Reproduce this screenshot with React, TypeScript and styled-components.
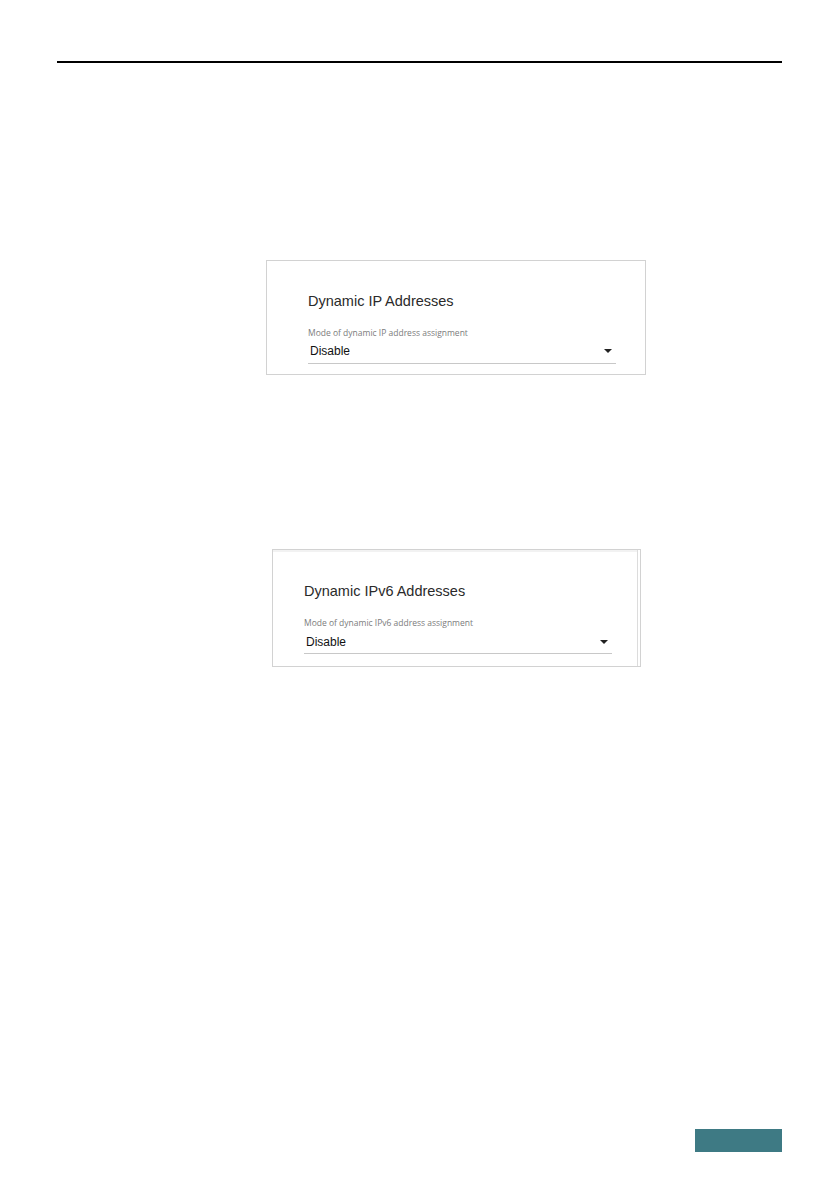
import styled, {createGlobalStyle} from "styled-components";

const GlobalStyle = createGlobalStyle`
  html, body {
    margin: 0;
    padding: 0;
    background: #fff;
  }
`;

const Page = styled.div`
  box-sizing: border-box;
  width: 839px;
  height: 1191px;
  padding: 61px 57px 39px;
  display: flex;
  flex-direction: column;
  font-family: "Liberation Sans", Arial, sans-serif;
`;

const HeaderRule = styled.div`
  height: 1.5px;
  background: #000;
`;

const Card = styled.section<{$top: number; $left: number; $width: number; $height: number; $padTop: number; $padLeft: number; $double?: boolean}>`
  box-sizing: border-box;
  margin-top: ${p => p.$top}px;
  margin-left: ${p => p.$left}px;
  width: ${p => p.$width}px;
  height: ${p => p.$height}px;
  padding: ${p => p.$padTop}px 0 0 ${p => p.$padLeft}px;
  border: 1px solid #d2d2d2;
  box-shadow: ${p => p.$double ? "inset -2px 0 0 #fff, inset -3px 0 0 #dcdcdc, inset 0 2px 0 #f2f2f2" : "none"};
  display: flex;
  flex-direction: column;
`;

const Title = styled.h3`
  margin: 0;
  font-size: 14.5px;
  line-height: 17px;
  font-weight: 400;
  color: #2a2a2a;
`;

const FieldLabel = styled.div<{$gap: number}>`
  margin-top: ${p => p.$gap}px;
  font-family: "Open Sans", "Noto Sans", sans-serif;
  font-size: 8.5px;
  line-height: 12px;
  color: #7c7c7c;
`;

const Select = styled.div<{$gap: number; $pad: number}>`
  box-sizing: border-box;
  margin-top: ${p => p.$gap}px;
  width: 308px;
  padding: 0 4px ${p => p.$pad}px 2px;
  border-bottom: 1px solid #c8c8c8;
  display: flex;
  align-items: center;
  justify-content: space-between;
  font-size: 12px;
  line-height: 16px;
  color: #111;
`;

const Caret = styled.span`
  width: 0;
  height: 0;
  border-left: 4px solid transparent;
  border-right: 4px solid transparent;
  border-top: 4px solid #222;
`;

const Footer = styled.div`
  margin-top: auto;
  align-self: flex-end;
  width: 87px;
  height: 23px;
  background: #3e7a84;
`;

function App() {
    return (
        <>
            <GlobalStyle/>
            <Page>
                <HeaderRule/>
                <Card $top={197} $left={209} $width={380} $height={115} $padTop={32} $padLeft={41}>
                    <Title>Dynamic IP Addresses</Title>
                    <FieldLabel $gap={17}>Mode of dynamic IP address assignment</FieldLabel>
                    <Select $gap={4} $pad={4}>
                        <span>Disable</span>
                        <Caret/>
                    </Select>
                </Card>
                <Card $top={174} $left={215} $width={369} $height={118} $padTop={33} $padLeft={31} $double>
                    <Title>Dynamic IPv6 Addresses</Title>
                    <FieldLabel $gap={17}>Mode of dynamic IPv6 address assignment</FieldLabel>
                    <Select $gap={5} $pad={3}>
                        <span>Disable</span>
                        <Caret/>
                    </Select>
                </Card>
                <Footer/>
            </Page>
        </>
    );
}

export default App;
